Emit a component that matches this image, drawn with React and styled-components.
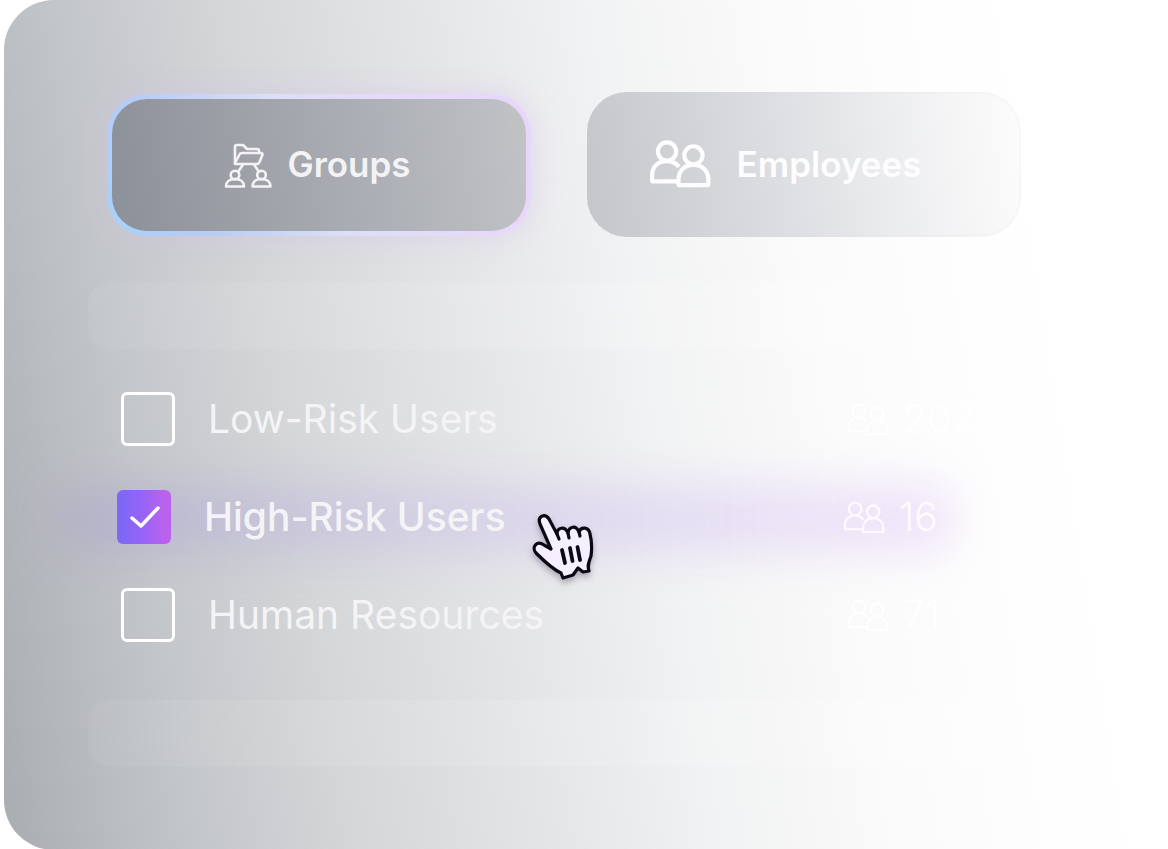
import React, { useState } from 'react'
import styled, { createGlobalStyle } from 'styled-components'

const GlobalStyle = createGlobalStyle`
* {
  box-sizing: border-box;
}
body {
  margin: 0;
  background-color: #fff;
  font-family: Inter, "Open Sans", sans-serif;
}
`;

const Panel = styled.main`
min-height: 100vh;
margin-left: 4px;
padding: 92px 147px 84px 84px;
border-radius: 50px 0 0 50px;
background: linear-gradient(81deg, #a9acb1 0%, #b4b7bc 6%, #c4c7ca 15%, #d4d6d8 27%, #e3e4e6 41%, #f1f2f3 55%, #fafafa 68%, #fefefe 82%, #fff 90%);
`;

const Tabs = styled.div`
display: grid;
grid-template-columns: 424px 434px;
justify-content: space-between;
align-items: center;
padding-left: 19px;
`;

const Tab = styled.button`
display: flex;
align-items: center;
justify-content: center;
gap: ${props => props.$active ? "15px" : "26px"};
height: ${props => props.$active ? "142px" : "145px"};
padding: 0 ${props => props.$active ? "3px" : "38px"} 2px 0;
border-radius: 40px;
border: ${props => props.$active ? "5px solid transparent" : "2px solid rgba(215, 215, 226, 0.1)"};
background: ${props => props.$active
  ? `linear-gradient(82deg, #8c9098, #a1a4ab 40%, #b0b3b8 70%, #c1c3c5) padding-box,
     linear-gradient(62deg, #a5d2fb, #b7cbf5 20%, #dcdff7 48%, #e8d8fb 80%, #e6d6fa) border-box`
  : "linear-gradient(82deg, #c4c6ca, #d1d3d6 25%, #dfe0e3 48%, #ebecee 68%, #f7f7f8 88%, #fcfcfc) border-box"};
box-shadow: ${props => props.$active ? "0 0 24px 4px rgba(208, 190, 236, 0.35)" : "none"};
color: ${props => props.$active ? "#f3f3f5" : "#fdfdff"};
font-family: inherit;
font-size: 35px;
font-weight: 600;
line-height: 48px;
cursor: pointer;
`;

const Bar = styled.div`
height: 66px;
margin-top: ${props => props.$top};
border-radius: 20px;
background: linear-gradient(90deg, rgba(255, 255, 255, 0.05), rgba(255, 255, 255, 0.18));
`;

const List = styled.ul`
list-style: none;
margin: 21px 0 0;
padding: 0;
`;

const Row = styled.li`
display: flex;
align-items: center;
justify-content: space-between;
position: relative;
height: 98px;
padding: 0 ${props => props.$active ? "38px" : "34px"} 0 ${props => props.$active ? "29px" : "33px"};
`;

const Glow = styled.div`
position: absolute;
z-index: 0;
inset: 16px 64px 12px -30px;
border-radius: 34px;
background: linear-gradient(90deg, rgba(168, 160, 210, 0.4), rgba(196, 184, 232, 0.4) 40%, rgba(231, 212, 250, 0.55));
filter: blur(20px);
`;

const Label = styled.label`
display: flex;
align-items: center;
gap: 33px;
position: relative;
color: #f4f4f7;
font-size: 39px;
font-weight: ${props => props.$active ? "500" : "400"};
line-height: 48px;
white-space: nowrap;
cursor: pointer;
`;

const CheckBox = styled.span`
display: grid;
width: 54px;
height: 54px;

input, svg {
  grid-area: 1 / 1;
  width: 54px;
  height: 54px;
  margin: 0;
}
input {
  appearance: none;
  border: 3px solid #fff;
  border-radius: 6px;
  cursor: pointer;
}
input:checked {
  border: none;
  background: linear-gradient(90deg, #7b68f6, #9863f7 50%, #ba62ee 85%);
}
svg {
  pointer-events: none;
}
`;

const Count = styled.span`
display: flex;
align-items: center;
gap: 14px;
position: relative;
width: 140px;
color: ${props => props.$active ? "#fefcff" : "#fff"};
font-size: 39px;
font-weight: 300;
line-height: 48px;
`;

const Pointer = styled.svg`
position: absolute;
z-index: 2;
left: 432px;
top: 32px;
width: 90px;
height: 90px;
filter: drop-shadow(0 4px 3px rgba(40, 30, 60, 0.3));
pointer-events: none;
`;

const PeopleIcon = ({ width, height, stroke }) => (
  <svg width={width} height={height} viewBox="0 0 64 50" fill="none" stroke="currentColor" strokeWidth={stroke} strokeLinejoin="round" aria-hidden="true">
    <circle cx="18.5" cy="12" r="9.5" />
    <path d="M31 28C28 24.5 24 22 18.5 22C9 22 3 28 3 36V43H30" />
    <circle cx="46" cy="16" r="9.5" />
    <path d="M30.5 47V41C30.5 33 36 26 46 26C56 26 61.5 33 61.5 41V47Z" />
  </svg>
);

const GroupsIcon = () => (
  <svg width="48" height="48" viewBox="0 -4 48 48" fill="none" stroke="currentColor" strokeWidth="2.6" strokeLinejoin="round" strokeLinecap="round" aria-hidden="true">
    <path d="M11 19V3Q11 1 13 1H19L23 5H33Q35 5 35 7V9" />
    <path d="M11 19L15.5 10.5Q16 9 18 9H37Q39 9 38.4 11L35.5 18Q34.5 20 33 20H12Q10.5 20 11 19Z" />
    <path d="M19 20.5L14 28M30 20.5L35 28" />
    <circle cx="11" cy="31" r="4.3" />
    <path d="M2 42.5C2 38 5.5 35 11 35S20 38 20 42.5Z" />
    <circle cx="37.5" cy="31" r="4.3" />
    <path d="M28.5 42.5C28.5 38 32 35 37.5 35S46.5 38 46.5 42.5Z" />
  </svg>
);

const HandPointer = () => (
  <Pointer viewBox="0 0 90 90" fill="none" stroke="#0c0914" strokeWidth="3.2" strokeLinejoin="round" strokeLinecap="round" aria-hidden="true">
    <path fill="#f5efff" d="M31 49L20 24C17 16 25 13 29 19L37 34C37 27 45 26 48 33C49 26 56 25 59 32C61 26 69 27 70 34C72 42 72 49 71 56C69 62 67 65 69 71L63 72L58 68L53 75L43 78L41 73C32 69 24 61 16 53C11 47 17 40 24 45Z" />
    <path d="M37 34L39 39M48 33L49 38M59 32L60 36" />
    <path strokeWidth="3.8" d="M42 50L45 63M50 48L52.5 61M57.5 47L60 60" />
  </Pointer>
);

const groups = [
  { id: "low", name: "Low-Risk Users", count: "202" },
  { id: "high", name: "High-Risk Users", count: "16" },
  { id: "hr", name: "Human Resources", count: "71" },
];

const App = () => {

  const [tab, setTab] = useState("groups")
  const [selected, setSelected] = useState("high")

  return (
    <>
      <GlobalStyle />
      <Panel>
        <Tabs>
          <Tab type="button" $active={tab === "groups"} onClick={() => setTab("groups")}>
            <GroupsIcon />
            Groups
          </Tab>
          <Tab type="button" $active={tab === "employees"} onClick={() => setTab("employees")}>
            <PeopleIcon width={62} height={48} stroke={4.4} />
            Employees
          </Tab>
        </Tabs>
        <Bar $top="46px" />
        <List>
          {groups.map(group => {
            const active = selected === group.id
            return (
              <Row key={group.id} $active={active}>
                {active && <Glow />}
                <Label $active={active}>
                  <CheckBox>
                    <input
                      type="checkbox"
                      checked={active}
                      onChange={() => setSelected(active ? "" : group.id)}
                    />
                    {active && (
                      <svg viewBox="0 0 54 54" fill="none" stroke="#fff" strokeWidth="3.5" strokeLinecap="round" strokeLinejoin="round" aria-hidden="true">
                        <path d="M15 28L24 36L41 18" />
                      </svg>
                    )}
                  </CheckBox>
                  {group.name}
                </Label>
                <Count $active={active}>
                  <PeopleIcon width={42} height={33} stroke={3.2} />
                  {group.count}
                </Count>
                {active && <HandPointer />}
              </Row>
            )
          })}
        </List>
        <Bar $top="36px" />
      </Panel>
    </>
  )
}

export default App
